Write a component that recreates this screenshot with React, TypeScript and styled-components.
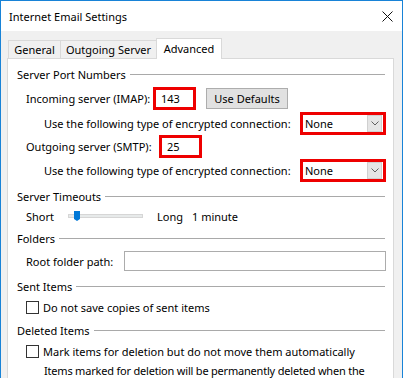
import React from "react";
import styled, { createGlobalStyle } from "styled-components";

const Global = createGlobalStyle`
  html, body { margin: 0; padding: 0; background: #fff; overflow: hidden; }
  * { box-sizing: border-box; }
`;

const FONT = `"Segoe UI", "Noto Sans", "Open Sans", sans-serif`;

const Window = styled.div`
  width: 403px;
  height: 378px;
  border: 1px solid #1883d7;
  border-bottom: none;
  background: #f0f0f0;
  overflow: hidden;
  font-family: ${FONT};
  font-size: 11px;
  color: #000;
  display: flex;
  flex-direction: column;
`;

const TitleBar = styled.div`
  height: 30px;
  flex: none;
  background: #fff;
  display: flex;
  align-items: center;
  padding: 0 9px 0 8px;
`;

const Title = styled.div`
  font-size: 11px;
`;

const Close = styled.svg`
  margin-left: auto;
  width: 11px;
  height: 11px;
`;

const Body = styled.div`
  flex: 1;
  padding-top: 7px;
  display: flex;
  flex-direction: column;
`;

const TabStrip = styled.div`
  height: 20px;
  margin-left: 7px;
  display: flex;
  align-items: flex-end;
  flex: none;
`;

const Tab = styled.div<{ $w: number; $active?: boolean; $first?: boolean }>`
  width: ${(p) => p.$w}px;
  height: ${(p) => (p.$active ? 21 : 18)}px;
  margin-bottom: ${(p) => (p.$active ? -1 : 0)}px;
  background: ${(p) => (p.$active ? "#fff" : "#f0f0f0")};
  border-top: 1px solid #d9d9d9;
  border-right: 1px solid #d9d9d9;
  border-left: ${(p) => (p.$first || p.$active ? "1px solid #d9d9d9" : "none")};
  margin-left: ${(p) => (p.$active ? -1 : 0)}px;
  position: relative;
  z-index: ${(p) => (p.$active ? 1 : 0)};
  display: flex;
  align-items: center;
  justify-content: center;
  padding-bottom: ${(p) => (p.$active ? 2 : 0)}px;
  white-space: nowrap;
`;

const Panel = styled.div`
  margin-left: 6px;
  width: 387px;
  flex: 1;
  background: #fff;
  border: 1px solid #d9d9d9;
  border-bottom: none;
  padding: 7px 7px 0 9px;
  display: flex;
  flex-direction: column;
`;

const Header = styled.div<{ $mt?: number }>`
  height: 16px;
  margin-top: ${(p) => p.$mt ?? 0}px;
  display: flex;
  align-items: center;
  gap: 4px;
  white-space: nowrap;
  flex: none;
`;

const Rule = styled.div`
  flex: 1;
  height: 1px;
  background: #a9a9a9;
  margin-right: 1px;
`;

const Row = styled.div<{ $mt?: number; $h?: number; $indent?: number }>`
  height: ${(p) => p.$h ?? 16}px;
  margin-top: ${(p) => p.$mt ?? 0}px;
  padding-left: ${(p) => p.$indent ?? 9}px;
  display: flex;
  align-items: center;
  white-space: nowrap;
  flex: none;
`;

const Label = styled.div<{ $w?: number; $ml?: number }>`
  width: ${(p) => (p.$w ? `${p.$w}px` : "auto")};
  margin-left: ${(p) => p.$ml ?? 0}px;
  flex: none;
`;

const PortBox = styled.div`
  width: 43px;
  height: 23px;
  border: 3px solid #ee0000;
  background: #fff;
  display: flex;
  align-items: center;
  padding-left: 5px;
  flex: none;
`;

const Button = styled.div`
  margin-left: 10px;
  width: 82px;
  height: 21px;
  background: #e1e1e1;
  border: 1px solid #adadad;
  display: flex;
  align-items: center;
  justify-content: center;
`;

const Select = styled.div`
  margin-left: auto;
  width: 86px;
  height: 23px;
  border: 3px solid #ee0000;
  background: #fff;
  display: flex;
  align-items: center;
  padding: 0 1px 0 2px;
`;

const SelectText = styled.div`
  flex: 1;
`;

const Arrow = styled.div`
  width: 15px;
  height: 17px;
  background: #e5e5e5;
  border: 1px solid #d0d0d0;
  display: flex;
  align-items: center;
  justify-content: center;
`;

const Track = styled.div`
  width: 75px;
  height: 4px;
  background: #e7eaea;
  border: 1px solid #d6d6d6;
  position: relative;
  flex: none;
`;

const Thumb = styled.svg`
  position: absolute;
  left: 5px;
  top: -4px;
`;

const TextInput = styled.div`
  flex: 1;
  height: 20px;
  border: 1px solid #acacac;
  background: #fff;
`;

const Check = styled.div`
  width: 13px;
  height: 13px;
  border: 1px solid #333;
  background: #fff;
  flex: none;
  margin-right: 4px;
`;

const LongText = styled(Label)`
  letter-spacing: -0.2px;
`;

function Combo() {
  return (
    <Select>
      <SelectText>None</SelectText>
      <Arrow>
        <svg width="8" height="5" viewBox="0 0 8 5">
          <polyline points="0.5,0.5 4,4 7.5,0.5" fill="none" stroke="#606060" strokeWidth="1" />
        </svg>
      </Arrow>
    </Select>
  );
}

export default function App() {
  return (
    <>
      <Global />
      <Window>
        <TitleBar>
          <Title>Internet Email Settings</Title>
          <Close viewBox="0 0 11 11">
            <line x1="0.5" y1="0.5" x2="10.5" y2="10.5" stroke="#111" strokeWidth="1" />
            <line x1="10.5" y1="0.5" x2="0.5" y2="10.5" stroke="#111" strokeWidth="1" />
          </Close>
        </TitleBar>
        <Body>
          <TabStrip>
            <Tab $w={53} $first>General</Tab>
            <Tab $w={96}>Outgoing Server</Tab>
            <Tab $w={66} $active>Advanced</Tab>
          </TabStrip>
          <Panel>
            <Header>
              Server Port Numbers
              <Rule />
            </Header>
            <Row $mt={5} $h={22}>
              <Label $w={127}>Incoming server (IMAP):</Label>
              <PortBox>143</PortBox>
              <Button>Use Defaults</Button>
            </Row>
            <Row $mt={3} $h={22} $indent={27}>
              <Label>Use the following type of encrypted connection:</Label>
              <Combo />
            </Row>
            <Row $mt={1} $h={23}>
              <Label $w={133}>Outgoing server (SMTP):</Label>
              <PortBox>25</PortBox>
            </Row>
            <Row $mt={1} $h={22} $indent={27}>
              <Label>Use the following type of encrypted connection:</Label>
              <Combo />
            </Row>
            <Header $mt={7}>
              Server Timeouts
              <Rule />
            </Header>
            <Row $mt={4}>
              <Label $w={42}>Short</Label>
              <Track>
                <Thumb width="6" height="10" viewBox="0 0 6 10">
                  <polygon points="0,0 6,0 6,8 3,10 0,8" fill="#0078d7" />
                </Thumb>
              </Track>
              <Label $w={35} $ml={14}>Long</Label>
              <Label>1 minute</Label>
            </Row>
            <Header $mt={6}>
              Folders
              <Rule />
            </Header>
            <Row $mt={5} $h={20}>
              <Label $w={98}>Root folder path:</Label>
              <TextInput />
            </Row>
            <Header $mt={7}>
              Sent Items
              <Rule />
            </Header>
            <Row $mt={5}>
              <Check />
              <Label>Do not save copies of sent items</Label>
            </Row>
            <Header $mt={7}>
              Deleted Items
              <Rule />
            </Header>
            <Row $mt={5}>
              <Check />
              <Label>Mark items for deletion but do not move them automatically</Label>
            </Row>
            <Row $mt={3} $indent={27}>
              <LongText>Items marked for deletion will be permanently deleted when the</LongText>
            </Row>
          </Panel>
        </Body>
      </Window>
    </>
  );
}
